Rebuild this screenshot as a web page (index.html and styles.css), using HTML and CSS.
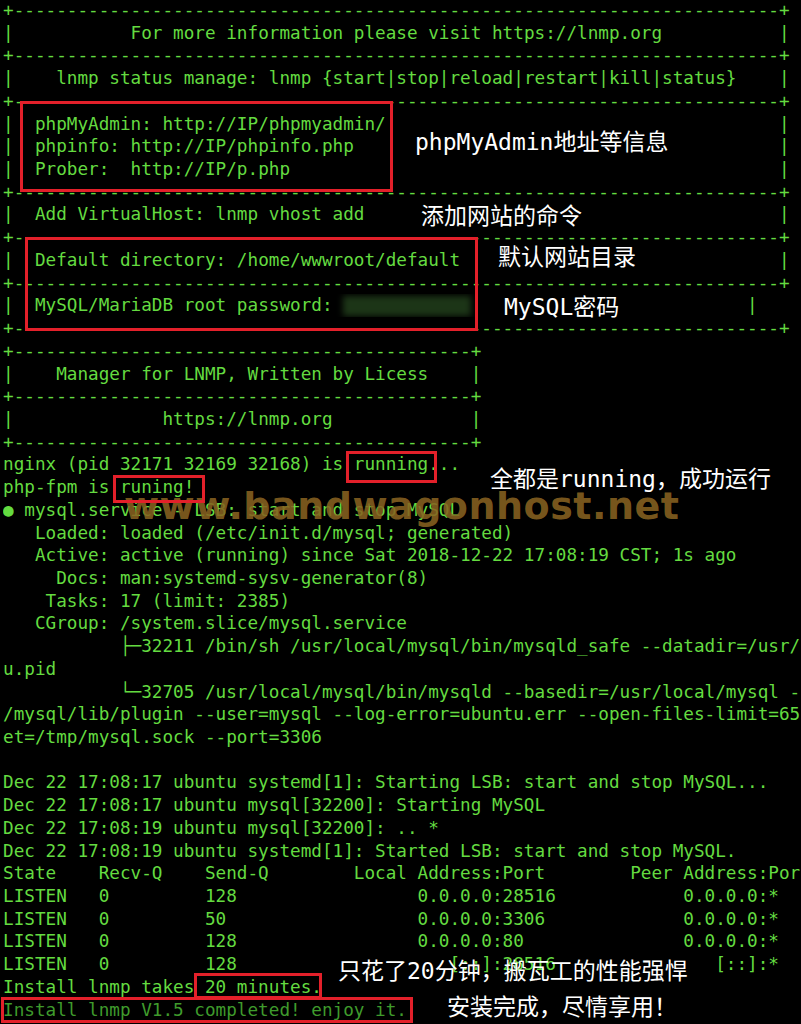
FILE: index.html
```html
<!DOCTYPE html>
<html lang="zh-CN">
<head>
<meta charset="utf-8">
<title>LNMP install complete</title>
<link rel="stylesheet" href="styles.css">
</head>
<body>
<div class="screen">
  <div class="term">
    <div class="bx"><span>+</span><span class="c">--------------------------------------------------------------------------------</span><span>+</span></div>
    <div class="bx"><span>|</span><span class="c">           For more information please visit https://lnmp.org</span><span>|</span></div>
    <div class="bx"><span>+</span><span class="c">--------------------------------------------------------------------------------</span><span>+</span></div>
    <div class="bx"><span>|</span><span class="c">    lnmp status manage: lnmp {start|stop|reload|restart|kill|status}</span><span>|</span></div>
    <div class="bx"><span>+</span><span class="c">--------------------------------------------------------------------------------</span><span>+</span></div>
    <div class="bx"><span>|</span><span class="c">  phpMyAdmin: http://IP/phpmyadmin/</span><span>|</span></div>
    <div class="bx"><span>|</span><span class="c">  phpinfo: http://IP/phpinfo.php</span><span>|</span></div>
    <div class="bx"><span>|</span><span class="c">  Prober:  http://IP/p.php</span><span>|</span></div>
    <div class="bx"><span>+</span><span class="c">--------------------------------------------------------------------------------</span><span>+</span></div>
    <div class="bx"><span>|</span><span class="c">  Add VirtualHost: lnmp vhost add</span><span>|</span></div>
    <div class="bx"><span>+</span><span class="c">--------------------------------------------------------------------------------</span><span>+</span></div>
    <div class="bx"><span>|</span><span class="c">  Default directory: /home/wwwroot/default</span><span>|</span></div>
    <div class="bx"><span>+</span><span class="c">--------------------------------------------------------------------------------</span><span>+</span></div>
    <div class="bx pwrow"><span>|</span><span class="c">  MySQL/MariaDB root password: <span class="pw"></span></span><span>|</span></div>
    <div class="bx"><span>+</span><span class="c">--------------------------------------------------------------------------------</span><span>+</span></div>
    <div class="bx short"><span>+</span><span class="c">--------------------------------------------------</span><span>+</span></div>
    <div class="bx short"><span>|</span><span class="c">    Manager for LNMP, Written by Licess</span><span>|</span></div>
    <div class="bx short"><span>+</span><span class="c">--------------------------------------------------</span><span>+</span></div>
    <div class="bx short"><span>|</span><span class="c">              https://lnmp.org</span><span>|</span></div>
    <div class="bx short"><span>+</span><span class="c">--------------------------------------------------</span><span>+</span></div>
    <div class="ln">nginx (pid 32171 32169 32168) is running...</div>
    <div class="ln">php-fpm is runing!</div>
    <div class="ln">● mysql.service - LSB: start and stop MySQL</div>
    <div class="ln">   Loaded: loaded (/etc/init.d/mysql; generated)</div>
    <div class="ln">   Active: active (running) since Sat 2018-12-22 17:08:19 CST; 1s ago</div>
    <div class="ln">     Docs: man:systemd-sysv-generator(8)</div>
    <div class="ln">    Tasks: 17 (limit: 2385)</div>
    <div class="ln">   CGroup: /system.slice/mysql.service</div>
    <div class="ln">           ├─32211 /bin/sh /usr/local/mysql/bin/mysqld_safe --datadir=/usr/local/mysql/var --pid-file=/usr/local/mysql/var/ubunt</div>
    <div class="ln">u.pid</div>
    <div class="ln">           └─32705 /usr/local/mysql/bin/mysqld --basedir=/usr/local/mysql --datadir=/usr/local/mysql/var --plugin-dir=/usr/local</div>
    <div class="ln">/mysql/lib/plugin --user=mysql --log-error=ubuntu.err --open-files-limit=65535 --pid-file=/usr/local/mysql/var/ubuntu.pid --sock</div>
    <div class="ln">et=/tmp/mysql.sock --port=3306</div>
    <div class="ln"> </div>
    <div class="ln">Dec 22 17:08:17 ubuntu systemd[1]: Starting LSB: start and stop MySQL...</div>
    <div class="ln">Dec 22 17:08:17 ubuntu mysql[32200]: Starting MySQL</div>
    <div class="ln">Dec 22 17:08:19 ubuntu mysql[32200]: .. *</div>
    <div class="ln">Dec 22 17:08:19 ubuntu systemd[1]: Started LSB: start and stop MySQL.</div>
    <div class="ln">State    Recv-Q    Send-Q        Local Address:Port        Peer Address:Port</div>
    <div class="ln">LISTEN   0         128                 0.0.0.0:28516            0.0.0.0:*</div>
    <div class="ln">LISTEN   0         50                  0.0.0.0:3306             0.0.0.0:*</div>
    <div class="ln">LISTEN   0         128                 0.0.0.0:80               0.0.0.0:*</div>
    <div class="ln">LISTEN   0         128                    [::]:28516               [::]:*</div>
    <div class="ln">Install lnmp takes 20 minutes.</div>
    <div class="ln done">Install lnmp V1.5 completed! enjoy it.</div>
  </div>

  <div class="wm">www.bandwagonhost.net</div>

  <div class="box b1"></div>
  <div class="box b2"></div>
  <div class="box b3"></div>
  <div class="box b4"></div>
  <div class="box b5"></div>
  <div class="box b6"></div>

  <div class="note n1">phpMyAdmin地址等信息</div>
  <div class="note n2">添加网站的命令</div>
  <div class="note n3">默认网站目录</div>
  <div class="note n4">MySQL密码</div>
  <div class="note n5">全都是running，成功运行</div>
  <div class="note n6">只花了20分钟，搬瓦工的性能强悍</div>
  <div class="note n7">安装完成，尽情享用！</div>
</div>
</body>
</html>
```

FILE: styles.css
```css
html, body {
  margin: 0;
  padding: 0;
  background: #000;
}

body {
  width: 801px;
  height: 1024px;
  overflow: hidden;
}

.screen {
  position: relative;
  width: 801px;
  height: 1024px;
  overflow: hidden;
  background: #000;
}

.term {
  margin-top: -1px;
  padding-left: 3px;
  font-family: "DejaVu Sans Mono", monospace;
  font-size: 17.66px;
  line-height: 22.727px;
  color: #64db40;
}

.ln {
  height: 22.727px;
  overflow: hidden;
  white-space: pre;
}

.bx {
  display: flex;
  width: 74ch;
  height: 22.727px;
  white-space: pre;
}

.bx .c {
  flex: 1;
  min-width: 0;
  overflow: hidden;
}

.bx.short {
  width: 45ch;
}

.bx.pwrow {
  width: 71ch;
}

.pw {
  display: inline-block;
  width: 12ch;
  height: 20px;
  vertical-align: -5px;
  background: #1c3517;
  filter: blur(3px);
}

.done {
  color: #3f9b2c;
}

.wm {
  position: absolute;
  left: 124px;
  top: 487px;
  font-family: "DejaVu Sans", sans-serif;
  font-weight: bold;
  font-size: 38px;
  line-height: 38px;
  letter-spacing: 0.5px;
  color: rgba(135, 98, 32, 0.9);
  white-space: nowrap;
}

.box {
  position: absolute;
  box-sizing: border-box;
  border: 3px solid #e3202a;
}

.b1 { left: 20px; top: 101px; width: 373px; height: 91px; }
.b2 { left: 25px; top: 237px; width: 453px; height: 94px; }
.b3 { left: 346px; top: 451px; width: 91px; height: 32px; }
.b4 { left: 113px; top: 475px; width: 92px; height: 28px; }
.b5 { left: 194px; top: 973px; width: 128px; height: 26px; }
.b6 { left: 1px; top: 997px; width: 412px; height: 26px; }

.note {
  position: absolute;
  font-family: "DejaVu Sans Mono", "Noto Sans CJK SC", monospace;
  font-size: 23px;
  line-height: 23px;
  color: #fff;
  white-space: nowrap;
}

.n1 { left: 415px; top: 131px; }
.n2 { left: 421px; top: 205px; }
.n3 { left: 498px; top: 246px; }
.n4 { left: 504px; top: 296px; }
.n5 { left: 490px; top: 468px; }
.n6 { left: 338px; top: 960px; }
.n7 { left: 447px; top: 996px; }
```
